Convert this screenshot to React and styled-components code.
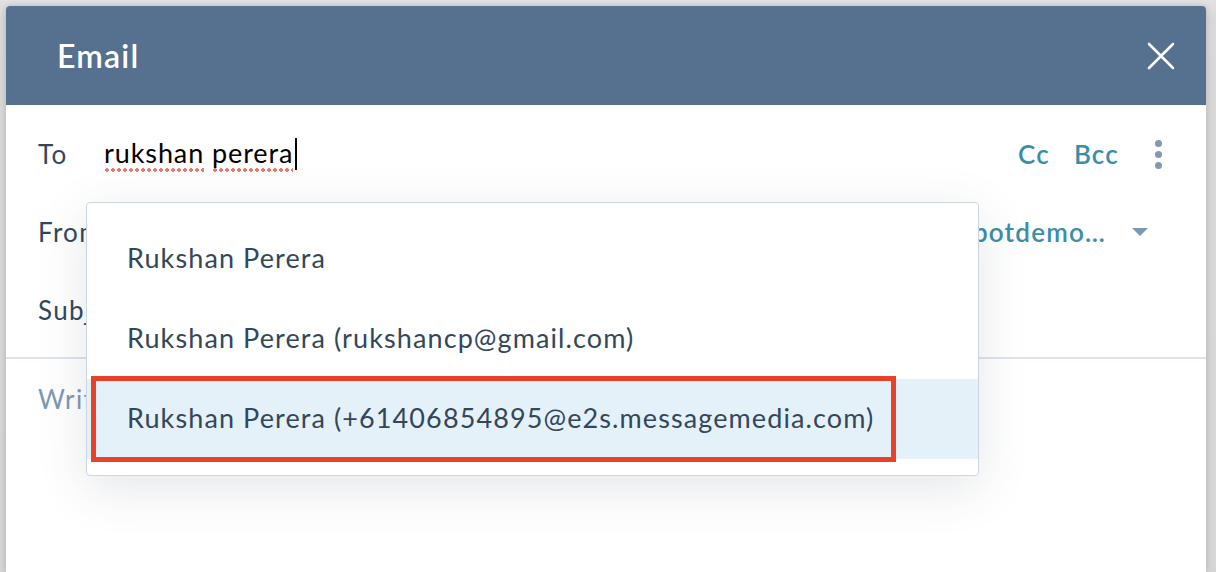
import React from "react";
import styled, { createGlobalStyle } from "styled-components";

const GlobalStyle = createGlobalStyle`
  html, body {
    margin: 0;
    padding: 0;
    width: 1216px;
    height: 572px;
    overflow: hidden;
    background: #dadada;
    font-family: Lato, "Open Sans", sans-serif;
  }
`;

const Page = styled.div`
  width: 1216px;
  height: 572px;
  box-sizing: border-box;
  padding: 6px 10px 0 6px;
  background: linear-gradient(#e2e2e2, #d8d8d8 20px, #d6d6d6);
`;

const Modal = styled.div`
  height: 100%;
  background: #fff;
  border-radius: 4px 4px 0 0;
  box-shadow: 0 0 6px rgba(0, 0, 0, 0.18);
  display: flex;
  flex-direction: column;
`;

const Header = styled.div`
  height: 99px;
  flex: none;
  background: #56708f;
  border-radius: 4px 4px 0 0;
  display: flex;
  align-items: center;
  justify-content: space-between;
  padding: 0 30px 0 51px;
`;

const Title = styled.h1`
  margin: 0;
  color: #fff;
  font-size: 32px;
  font-weight: 600;
  letter-spacing: 1.2px;
`;

const CloseButton = styled.button`
  border: 0;
  background: none;
  padding: 0;
  width: 30px;
  height: 30px;
  display: flex;
  align-items: center;
  justify-content: center;
`;

const Fields = styled.div`
  position: relative;
  padding: 10px 0 8px;
  border-bottom: 2px solid #dfe3eb;
`;

const Row = styled.div`
  height: 78px;
  display: flex;
  align-items: center;
  padding: 0 44px 0 32px;
  font-size: 26px;
  letter-spacing: 1.3px;
  color: #33475b;
`;

const Label = styled.span`
  width: 66px;
  flex: none;
`;

const Input = styled.div`
  flex: 1;
  display: flex;
  align-items: center;
  color: #000;
  font-size: 27px;
  letter-spacing: 0.9px;
`;

const Misspelled = styled.span`
  background-image: radial-gradient(circle, #ef7a6b 1.6px, transparent 2px);
  background-repeat: repeat-x;
  background-size: 6px 4px;
  background-position: 0 100%;
  padding-bottom: 3px;
`;

const Caret = styled.span`
  display: inline-block;
  width: 2px;
  height: 32px;
  background: #000;
  margin-left: 2px;
`;

const Actions = styled.div`
  display: flex;
  align-items: center;
  gap: 24px;
`;

const LinkText = styled.span`
  color: #3a8ea9;
  font-weight: 600;
  font-size: 26px;
  letter-spacing: 1.2px;
`;

const Kebab = styled.span`
  display: flex;
  flex-direction: column;
  gap: 4px;
  margin-left: 12px;

  i {
    width: 7px;
    height: 7px;
    border-radius: 50%;
    background: #8597b2;
  }
`;

const FromValue = styled.div`
  flex: 1;
  display: flex;
  justify-content: flex-end;
  align-items: center;
  gap: 26px;
  margin-right: 14px;
`;

const DropCaret = styled.span`
  width: 0;
  height: 0;
  border-left: 8px solid transparent;
  border-right: 8px solid transparent;
  border-top: 8px solid #7c98b6;
`;

const Body = styled.div`
  padding: 24px 32px;
  font-size: 26px;
  letter-spacing: 1.3px;
  color: #7c98b6;
`;

const Dropdown = styled.ul`
  position: absolute;
  top: 97px;
  left: 80px;
  width: 893px;
  margin: 0;
  padding: 16px 0;
  list-style: none;
  box-sizing: border-box;
  background: #fff;
  border: 1px solid #cbd6e2;
  border-radius: 4px;
  box-shadow: 0 12px 50px rgba(45, 62, 80, 0.13);
`;

const Option = styled.li`
  position: relative;
  height: 80px;
  box-sizing: border-box;
  padding: 0 0 3px 40px;
  display: flex;
  align-items: center;
  font-size: 27px;
  letter-spacing: 1.1px;
  color: #33475b;
  background: ${(p) => (p.$active ? "#e5f1f8" : "transparent")};
`;

const Highlight = styled.span`
  position: absolute;
  top: -3px;
  left: 4px;
  width: 805px;
  height: 86px;
  box-sizing: border-box;
  border: 5px solid #e8412b;
`;

const options = [
  "Rukshan Perera",
  "Rukshan Perera (rukshancp@gmail.com)",
  "Rukshan Perera (+61406854895@e2s.messagemedia.com)",
];

export default function App() {
  return (
    <Page>
      <GlobalStyle />
      <Modal>
        <Header>
          <Title>Email</Title>
          <CloseButton aria-label="Close">
            <svg width="28" height="28" viewBox="0 0 28 28">
              <path
                d="M2 2 L26 26 M26 2 L2 26"
                stroke="#fff"
                strokeWidth="2.6"
                strokeLinecap="round"
              />
            </svg>
          </CloseButton>
        </Header>
        <Fields>
          <Row>
            <Label>To</Label>
            <Input>
              <Misspelled>rukshan</Misspelled>&nbsp;
              <Misspelled>perera</Misspelled>
              <Caret />
            </Input>
            <Actions>
              <LinkText>Cc</LinkText>
              <LinkText>Bcc</LinkText>
              <Kebab>
                <i />
                <i />
                <i />
              </Kebab>
            </Actions>
          </Row>
          <Row>
            <Label>From</Label>
            <FromValue>
              <LinkText>rukshan@hubspotdemo…</LinkText>
              <DropCaret />
            </FromValue>
          </Row>
          <Row>
            <Label>Subject</Label>
          </Row>
          <Dropdown>
            {options.map((o, i) => (
              <Option key={o} $active={i === 2}>
                {o}
                {i === 2 && <Highlight />}
              </Option>
            ))}
          </Dropdown>
        </Fields>
        <Body>Write…</Body>
      </Modal>
    </Page>
  );
}
